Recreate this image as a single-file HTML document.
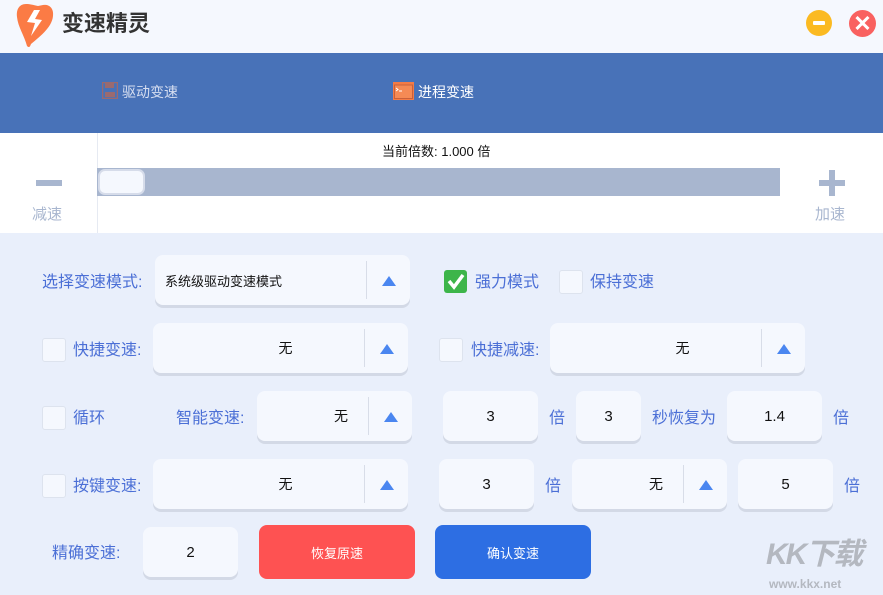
<!DOCTYPE html>
<html><head><meta charset="utf-8"><style>
*{margin:0;padding:0;box-sizing:border-box}
body{width:883px;height:595px;overflow:hidden;position:relative;background:#e9effb;font-family:"Liberation Sans","Noto Sans CJK SC",sans-serif;}
.a{position:absolute}
.lbl{position:absolute;color:#4b6fd6;font-size:16px;line-height:20px}
.box{position:absolute;background:#f5f8fe;border-radius:8px;box-shadow:0 3px 0 #d3d9e6;font-size:14px;color:#111;display:flex;align-items:center;justify-content:center}
.sel .arr{position:absolute;right:0;top:0;bottom:0;width:44px;border-left:1px solid #d8dde8;margin:6px 0}
.sel .arr:after{content:"";position:absolute;left:15px;top:15px;border-left:7px solid transparent;border-right:7px solid transparent;border-bottom:10px solid #4a86f0}
.cb{position:absolute;width:24px;height:24px;background:#f5f8fe;border:1px solid #dde3ee;border-radius:3px}
</style></head><body>
<div class="a" style="left:0;top:0;width:883px;height:53px;background:#f5f8fe"></div>
<svg class="a" style="left:16px;top:2px" width="40" height="46" viewBox="0 0 40 46">
<path d="M10 2 C3 2 0 8 1 15 C2 25 8 33 11 44 C13 46 14 45 15 42 C22 36 36 26 37 14 C38 6 33 2 27 3 L22 4 C17 3 14 2 10 2Z" fill="#fb7b45"/>
<path d="M18 8 L11 20 L19 21 L15 34 L26 18 L19 17 L24 8Z" fill="#fff"/>
</svg>
<div class="a" style="left:62px;top:9px;font-size:22px;font-weight:bold;color:#333;line-height:30px">变速精灵</div>
<div class="a" style="left:806px;top:10px;width:26px;height:26px;border-radius:50%;background:#fbba22"></div>
<div class="a" style="left:813px;top:21px;width:12px;height:4px;background:#fff;border-radius:1px"></div>
<div class="a" style="left:849px;top:10px;width:27px;height:27px;border-radius:50%;background:#f96160;color:#fff;font-size:22px;font-weight:bold;text-align:center;line-height:27px">✕</div>

<div class="a" style="left:0;top:53px;width:883px;height:80px;background:#4872b8"></div>
<svg class="a" style="left:102px;top:82px" width="16" height="17" viewBox="0 0 16 17"><rect x="0.5" y="0.5" width="15" height="16" fill="none" stroke="#9a6a70" stroke-width="1.5"/><rect x="3" y="1" width="9" height="5" fill="#9a6a70"/><rect x="3" y="10" width="10" height="5" fill="#9a6a70"/></svg>
<div class="a" style="left:122px;top:82px;color:#d6def0;font-size:14px;line-height:20px">驱动变速</div>
<svg class="a" style="left:393px;top:82px" width="21" height="18" viewBox="0 0 21 18"><rect x="0" y="0" width="21" height="18" fill="#f47b45"/><rect x="1.5" y="3" width="18" height="13.5" fill="#f58a55" stroke="#c9603a"/><path d="M3 6l2 1.5-2 1.5M6 9h3" stroke="#fff" stroke-width="1" fill="none"/></svg>
<div class="a" style="left:418px;top:82px;color:#fff;font-size:14px;line-height:20px">进程变速</div>

<div class="a" style="left:0;top:133px;width:883px;height:100px;background:#fff"></div>
<div class="a" style="left:97px;top:133px;width:1px;height:100px;background:#e6eaf2"></div>
<div class="a" style="left:36px;top:180px;width:26px;height:6px;background:#a8b6cf"></div>
<div class="a" style="left:32px;top:203px;color:#a8b6cf;font-size:15px">减速</div>
<div class="a" style="left:819px;top:180px;width:26px;height:6px;background:#a8b6cf"></div>
<div class="a" style="left:829px;top:170px;width:6px;height:26px;background:#a8b6cf"></div>
<div class="a" style="left:815px;top:203px;color:#a8b6cf;font-size:15px">加速</div>
<div class="a" style="left:382px;top:142px;font-size:13px;color:#111;line-height:20px">当前倍数: 1.000 倍</div>
<div class="a" style="left:97px;top:168px;width:683px;height:28px;background:#a8b6cf"></div>
<div class="a" style="left:98px;top:169px;width:47px;height:26px;background:#f5f8fe;border:2px solid #d6dcea;border-radius:7px"></div>

<div class="lbl" style="left:42px;top:273px">选择变速模式:</div>
<div class="box sel" style="left:155px;top:255px;width:255px;height:50px;justify-content:flex-start;padding-left:10px;font-size:13px">系统级驱动变速模式<div class="arr"></div></div>
<div class="a" style="left:444px;top:270px;width:23px;height:23px;background:#3db54a;border-radius:3px"></div>
<svg class="a" style="left:444px;top:270px" width="23" height="23"><path d="M5 11l5 6 9-12" stroke="#fff" stroke-width="3.5" fill="none"/></svg>
<div class="lbl" style="left:475px;top:273px">强力模式</div>
<div class="cb" style="left:559px;top:270px"></div>
<div class="lbl" style="left:590px;top:273px">保持变速</div>

<div class="cb" style="left:42px;top:338px"></div>
<div class="lbl" style="left:73px;top:341px">快捷变速:</div>
<div class="box sel" style="left:153px;top:323px;width:255px;height:50px;padding-right:0px;padding-left:10px">无<div class="arr"></div></div>
<div class="cb" style="left:439px;top:338px"></div>
<div class="lbl" style="left:471px;top:341px">快捷减速:</div>
<div class="box sel" style="left:550px;top:323px;width:255px;height:50px;padding-left:10px">无<div class="arr"></div></div>

<div class="cb" style="left:42px;top:406px"></div>
<div class="lbl" style="left:73px;top:409px">循环</div>
<div class="lbl" style="left:176px;top:409px">智能变速:</div>
<div class="box sel" style="left:257px;top:391px;width:155px;height:50px;justify-content:flex-end;padding-right:64px">无<div class="arr"></div></div>
<div class="box" style="left:443px;top:391px;width:95px;height:50px;font-size:15px">3</div>
<div class="lbl" style="left:549px;top:409px">倍</div>
<div class="box" style="left:576px;top:391px;width:65px;height:50px;font-size:15px">3</div>
<div class="lbl" style="left:652px;top:409px">秒恢复为</div>
<div class="box" style="left:727px;top:391px;width:95px;height:50px;font-size:15px">1.4</div>
<div class="lbl" style="left:833px;top:409px">倍</div>

<div class="cb" style="left:42px;top:474px"></div>
<div class="lbl" style="left:73px;top:477px">按键变速:</div>
<div class="box sel" style="left:153px;top:459px;width:255px;height:50px;padding-left:10px">无<div class="arr"></div></div>
<div class="box" style="left:439px;top:459px;width:95px;height:50px;font-size:15px">3</div>
<div class="lbl" style="left:545px;top:477px">倍</div>
<div class="box sel" style="left:572px;top:459px;width:155px;height:50px;justify-content:flex-end;padding-right:64px">无<div class="arr"></div></div>
<div class="box" style="left:738px;top:459px;width:95px;height:50px;font-size:15px">5</div>
<div class="lbl" style="left:844px;top:477px">倍</div>

<div class="lbl" style="left:52px;top:544px">精确变速:</div>
<div class="box" style="left:143px;top:527px;width:95px;height:50px;font-size:15px">2</div>
<div class="a" style="left:259px;top:525px;width:156px;height:54px;background:#fe5252;border-radius:8px;color:#fff;font-size:13px;display:flex;align-items:center;justify-content:center">恢复原速</div>
<div class="a" style="left:435px;top:525px;width:156px;height:54px;background:#2d6ee3;border-radius:8px;color:#fff;font-size:13px;display:flex;align-items:center;justify-content:center">确认变速</div>
<div class="a" style="left:766px;top:538px;font-size:30px;font-weight:bold;color:#b4b8c0;letter-spacing:-2px;line-height:34px;font-style:italic">KK下载</div>
<div class="a" style="left:769px;top:577px;font-size:12px;color:#b4b8c0;font-weight:bold;line-height:14px">www.kkx.net</div>
</body></html>
